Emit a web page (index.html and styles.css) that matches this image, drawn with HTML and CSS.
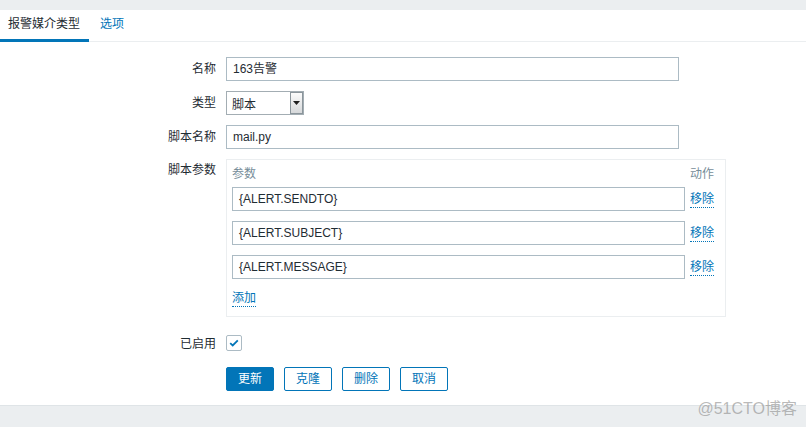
FILE: index.html
```html
<!DOCTYPE html>
<html lang="zh">
<head>
<meta charset="utf-8">
<title>报警媒介类型</title>
<link rel="stylesheet" href="styles.css">
</head>
<body>
<div class="page">
  <div class="topbar"></div>
  <main class="main">
    <nav class="tabs">
      <span class="tab active">报警媒介类型</span>
      <span class="tab link">选项</span>
    </nav>
    <form class="form">
      <label class="label center">名称</label>
      <div class="field"><div class="input wide">163告警</div></div>

      <label class="label center">类型</label>
      <div class="field">
        <div class="select">
          <span class="select-text">脚本</span>
          <span class="select-btn"><svg width="7" height="4" viewBox="0 0 7 4"><path d="M0 0h7L3.5 4z" fill="#1f1f1f"/></svg></span>
        </div>
      </div>

      <label class="label center">脚本名称</label>
      <div class="field"><div class="input wide">mail.py</div></div>

      <label class="label top">脚本参数</label>
      <div class="field">
        <div class="params">
          <div class="ph">参数</div>
          <div class="ph">动作</div>

          <div class="input param">{ALERT.SENDTO}</div>
          <a class="remove">移除</a>

          <div class="input param">{ALERT.SUBJECT}</div>
          <a class="remove">移除</a>

          <div class="input param">{ALERT.MESSAGE}</div>
          <a class="remove">移除</a>

          <div class="add-cell"><a class="add">添加</a></div>
        </div>
      </div>

      <label class="label enabled">已启用</label>
      <div class="field enabled-field">
        <span class="checkbox"><svg width="10" height="8" viewBox="0 0 10 8"><path d="M1.2 4.2l2.5 2.3L8.8 1.3" fill="none" stroke="#0275b8" stroke-width="1.8"/></svg></span>
      </div>

      <div></div>
      <div class="buttons">
        <button type="button" class="btn primary">更新</button>
        <button type="button" class="btn">克隆</button>
        <button type="button" class="btn">删除</button>
        <button type="button" class="btn">取消</button>
      </div>
    </form>
  </main>
  <footer class="footer"></footer>
  <div class="watermark">@51CTO博客</div>
</div>
</body>
</html>
```

FILE: styles.css
```css
* { box-sizing: border-box; }

html, body {
  margin: 0;
  padding: 0;
  height: 100%;
}

body {
  font-family: "Liberation Sans", Arial, "Noto Sans CJK SC", sans-serif;
  font-size: 12px;
  color: #1f2c33;
  background: #ffffff;
}

.page {
  position: relative;
  height: 100%;
  display: flex;
  flex-direction: column;
}

.topbar {
  height: 10px;
  background: #ebeef0;
  flex: none;
}

.main {
  flex: 1 1 0;
  min-height: 0;
  overflow: hidden;
  background: #ffffff;
}

.tabs {
  display: flex;
  height: 32px;
  border-bottom: 1px solid #ebeef0;
}

.tab {
  height: 32px;
  line-height: 29px;
  padding: 0 9px 0 8px;
  margin-bottom: -1px;
  border-bottom: 3px solid transparent;
}

.tab.active {
  border-bottom-color: #0275b8;
  color: #1f2c33;
}

.tab.link {
  color: #0275b8;
  padding-left: 11px;
}

.form {
  display: grid;
  grid-template-columns: 216px 1fr;
  column-gap: 10px;
  row-gap: 10px;
  padding-top: 15px;
}

.label {
  text-align: right;
  color: #1f2c33;
}

.label.center {
  line-height: 24px;
}

.label.top {
  padding-top: 4px;
  line-height: 14px;
}

.label.enabled {
  line-height: 16px;
  padding-top: 9px;
}

.field {
  display: flex;
  align-items: flex-start;
}

.input {
  height: 24px;
  border: 1px solid #acbbc4;
  background: #ffffff;
  line-height: 22px;
  padding: 0 6px;
  color: #1f2c33;
  white-space: nowrap;
}

.input.wide {
  width: 453px;
}

.select {
  width: 78px;
  height: 24px;
  border: 1px solid #a3adb3;
  display: flex;
  align-items: center;
  justify-content: space-between;
  padding: 0 0 0 5px;
  background: #ffffff;
}

.select-btn {
  width: 13px;
  height: 22px;
  border: 1px solid #8b959b;
  background: linear-gradient(#fbfbfb, #d6d8da);
  display: flex;
  align-items: center;
  justify-content: center;
}

.params {
  width: 500px;
  border: 1px solid #ebeef0;
  display: grid;
  grid-template-columns: 453px auto;
  column-gap: 5px;
  row-gap: 10px;
  padding: 0 10px 9px 5px;
}

.ph {
  color: #768d99;
  height: 17px;
  line-height: 14px;
  padding-top: 7px;
}

.remove {
  color: #0275b8;
  line-height: 24px;
  height: 21px;
  align-self: start;
  border-bottom: 1px dotted #0275b8;
  justify-self: start;
  display: flex;
  align-items: center;
  padding-top: 4px;
}

.add-cell {
  grid-column: 1 / 3;
  padding-top: 2px;
  height: 18px;
}

.add {
  color: #0275b8;
  border-bottom: 1px dotted #0275b8;
  display: inline-block;
  line-height: 15px;
}

.enabled-field {
  padding-top: 8px;
}

.checkbox {
  width: 16px;
  height: 16px;
  border: 1px solid #acbbc4;
  border-radius: 2px;
  display: flex;
  align-items: center;
  justify-content: center;
  background: #ffffff;
}

.buttons {
  display: flex;
  gap: 10px;
  padding-top: 5px;
}

.btn {
  width: 48px;
  height: 24px;
  border: 1px solid #0275b8;
  border-radius: 2px;
  background: #ffffff;
  color: #0275b8;
  font-family: "Liberation Sans", Arial, "Noto Sans CJK SC", sans-serif;
  font-size: 12px;
  padding: 0;
  line-height: 22px;
}

.btn.primary {
  background: #0275b8;
  color: #ffffff;
}

.footer {
  height: 22px;
  flex: none;
  background: #ebeef0;
  border-top: 1px solid #dfe4e7;
}

.watermark {
  position: absolute;
  right: 9px;
  bottom: 10px;
  font-size: 16px;
  color: rgba(140, 140, 140, 0.6);
  font-family: "Liberation Sans", Arial, "Noto Sans CJK SC", sans-serif;
  line-height: 16px;
}
```
